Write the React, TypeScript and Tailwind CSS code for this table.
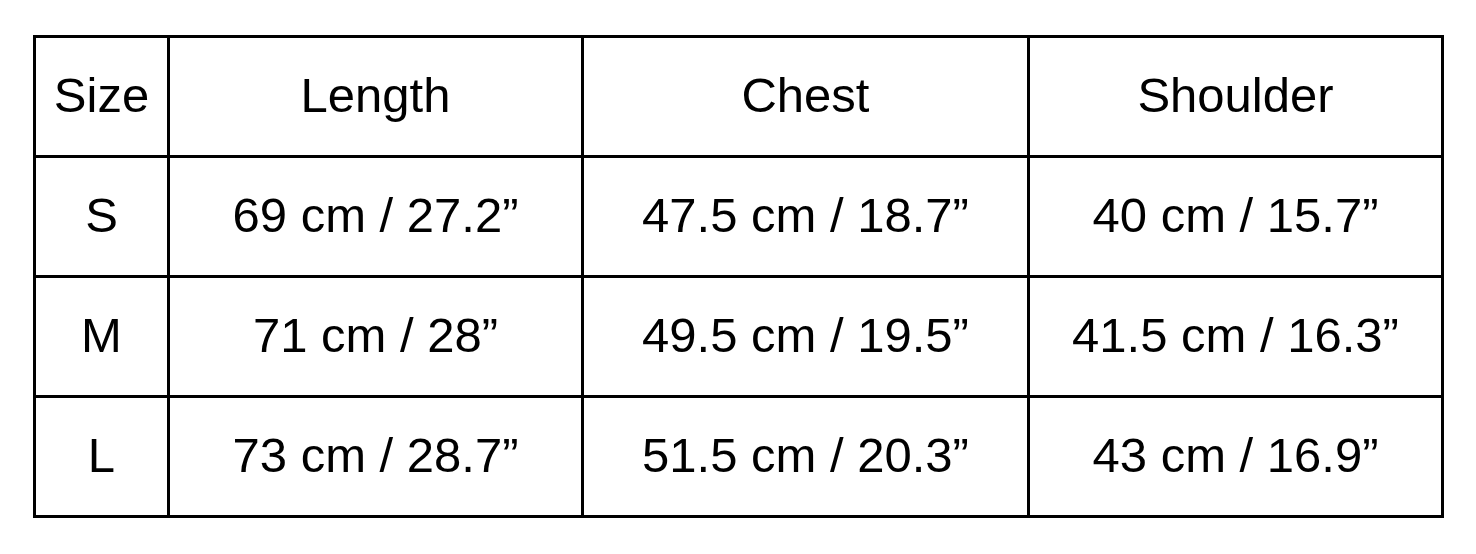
const headers = ["Size", "Length", "Chest", "Shoulder"];

const rows = [
  ["S", "69 cm / 27.2”", "47.5 cm / 18.7”", "40 cm / 15.7”"],
  ["M", "71 cm / 28”", "49.5 cm / 19.5”", "41.5 cm / 16.3”"],
  ["L", "73 cm / 28.7”", "51.5 cm / 20.3”", "43 cm / 16.9”"],
];

function Cell({ children }: { children: React.ReactNode }) {
  return (
    <div className="flex h-[120px] items-center justify-center border-b-[3px] border-r-[3px] border-black pb-[2px]">
      {children}
    </div>
  );
}

export default function App() {
  return (
    <div className="h-[554px] w-[1476px] bg-white pl-[33px] pt-[35px] font-['Liberation_Sans',Arial,sans-serif] text-[49px] text-black">
      <div className="grid w-[1411px] grid-cols-[134px_414px_446px_414px] border-l-[3px] border-t-[3px] border-black">
        {headers.map((h) => (
          <Cell key={h}>{h}</Cell>
        ))}
        {rows.map((r) =>
          r.map((v, i) => <Cell key={r[0] + i}>{v}</Cell>)
        )}
      </div>
    </div>
  );
}
